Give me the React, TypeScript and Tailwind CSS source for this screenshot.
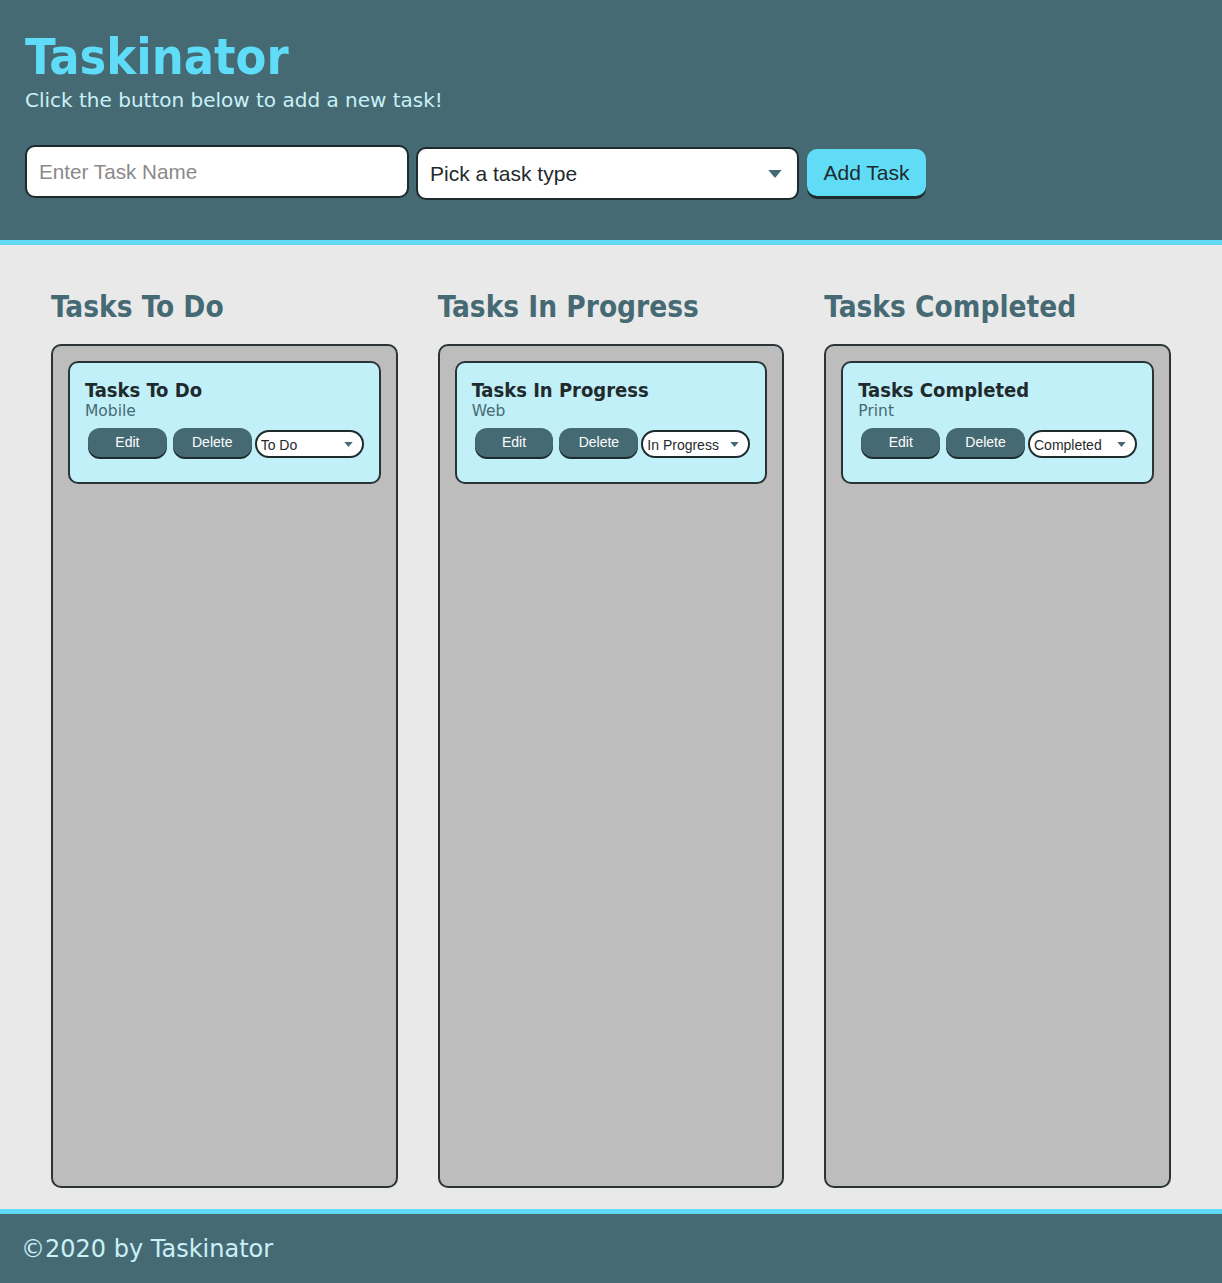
import { useState } from "react";

const columns = [
  { heading: "Tasks To Do", task: "Tasks To Do", type: "Mobile", status: "To Do" },
  { heading: "Tasks In Progress", task: "Tasks In Progress", type: "Web", status: "In Progress" },
  { heading: "Tasks Completed", task: "Tasks Completed", type: "Print", status: "Completed" }
];

const statuses = ["To Do", "In Progress", "Completed"];

function Caret({ className }: { className?: string }) {
  return (
    <svg viewBox="0 0 10 6" className={className} aria-hidden="true">
      <path d="M0 0h10L5 6z" fill="currentColor" />
    </svg>
  );
}

function TaskCard({ task, type, status }: { task: string; type: string; status: string }) {
  const [value, setValue] = useState(status);
  return (
    <div className="h-[123px] rounded-[10px] border-2 border-[#2a3437] bg-[#c1f0f8] px-[15px] pt-[16px]">
      <h3 className="font-['DejaVu_Sans_Condensed','DejaVu_Sans',sans-serif] text-[20px] font-bold leading-[22px] text-[#1f2a2d]">
        {task}
      </h3>
      <p className="font-['DejaVu_Sans',sans-serif] text-[15.5px] leading-[20px] text-[#466a74]">{type}</p>
      <div className="mt-[7px] flex items-start pl-[3px]">
        <button className="h-[29px] w-[79px] rounded-[12px] bg-[#466a74] font-['Liberation_Sans',Arial,sans-serif] text-[14px] text-white shadow-[0_2px_0_#1f2a2d]">
          Edit
        </button>
        <button className="ml-[6px] h-[29px] w-[79px] rounded-[12px] bg-[#466a74] font-['Liberation_Sans',Arial,sans-serif] text-[14px] text-white shadow-[0_2px_0_#1f2a2d]">
          Delete
        </button>
        <div className="relative ml-[3px] mt-[2px]">
          <select
            value={value}
            onChange={(e) => setValue(e.target.value)}
            className="h-[28px] w-[109px] appearance-none rounded-[14px] border-2 border-[#1f2a2d] bg-white pl-[4px] pt-[3px] font-['Liberation_Sans',Arial,sans-serif] text-[14px] text-[#1f2a2d] outline-none"
          >
            {statuses.map((s) => (
              <option key={s}>{s}</option>
            ))}
          </select>
          <Caret className="pointer-events-none absolute right-[11px] top-[12px] h-[5px] w-[9px] text-[#466a74]" />
        </div>
      </div>
    </div>
  );
}

export default function App() {
  return (
    <div className="flex min-h-[1283px] flex-col bg-[#e9e9e9]">
      <header className="h-[245px] border-b-[5px] border-[#5fd9f4] bg-[#466a74] px-[25px] pt-[27px]">
        <h1 className="font-['DejaVu_Sans_Condensed','DejaVu_Sans',sans-serif] text-[50px] font-bold leading-[60px] text-[#5fdcf7]">
          Taskinator
        </h1>
        <p className="font-['DejaVu_Sans',sans-serif] text-[20px] leading-[26px] text-[#c9f1f7]">
          Click the button below to add a new task!
        </p>
        <form className="mt-[32px] flex items-start" onSubmit={(e) => e.preventDefault()}>
          <input
            placeholder="Enter Task Name"
            className="h-[53px] w-[384px] rounded-[10px] border-2 border-[#1f2a2d] bg-white px-[12px] font-['Liberation_Sans',Arial,sans-serif] text-[20.7px] text-[#1f2a2d] outline-none placeholder:text-[#8a8a8a]"
          />
          <div className="relative ml-[7px] mt-[2px]">
            <select
              defaultValue=""
              className="h-[53px] w-[383px] appearance-none rounded-[10px] border-2 border-[#1f2a2d] bg-white px-[12px] font-['Liberation_Sans',Arial,sans-serif] text-[21px] text-[#1f2a2d] outline-none"
            >
              <option value="" disabled>
                Pick a task type
              </option>
              <option>Web</option>
              <option>Mobile</option>
              <option>Print</option>
            </select>
            <Caret className="pointer-events-none absolute right-[17px] top-[23px] h-[8px] w-[14px] text-[#466a74]" />
          </div>
          <button className="ml-[8px] mt-[4px] h-[47px] w-[119px] rounded-[10px] bg-[#60dcf7] font-['Liberation_Sans',Arial,sans-serif] text-[21px] text-[#1f2a2d] shadow-[0_3px_0_#1f2a2d]">
            Add Task
          </button>
        </form>
      </header>

      <main className="flex-1 px-[51px] pt-[45px]">
        <div className="grid grid-cols-3 gap-x-10">
          {columns.map((col) => (
            <section key={col.heading}>
              <h2 className="font-['DejaVu_Sans_Condensed','DejaVu_Sans',sans-serif] text-[29.5px] font-bold leading-[35px] text-[#466a74]">
                {col.heading}
              </h2>
              <div className="mt-[19px] h-[844px] rounded-[10px] border-2 border-[#2a3437] bg-[#bdbdbd] p-[15px]">
                <TaskCard task={col.task} type={col.type} status={col.status} />
              </div>
            </section>
          ))}
        </div>
      </main>

      <footer className="h-[74px] border-t-[5px] border-[#5fd9f4] bg-[#466a74] px-[21px] pt-[19px]">
        <p className="font-['DejaVu_Sans',sans-serif] text-[24px] leading-[32px] text-[#c9f1f7]">©2020 by Taskinator</p>
      </footer>
    </div>
  );
}
